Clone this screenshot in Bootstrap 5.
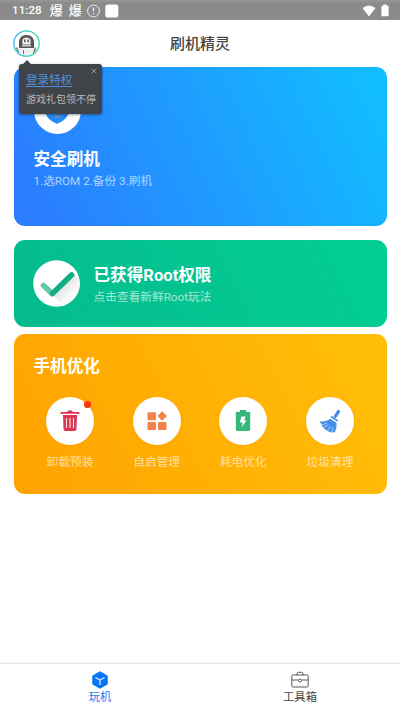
<!DOCTYPE html>
<html lang="zh-CN">
<head>
<meta charset="utf-8">
<meta name="viewport" content="width=device-width, initial-scale=1">
<title>刷机精灵</title>
<link href="https://cdn.jsdelivr.net/npm/bootstrap@5.3.0/dist/css/bootstrap.min.css" rel="stylesheet">
<style>
body{font-family:Roboto,"Noto Sans CJK SC",sans-serif;background:#fff;height:710px;overflow:hidden;line-height:1}
svg{display:block;flex:none}
.status{height:20px;background:linear-gradient(#999 0,#8b8b8b 3px);padding:1px 10px 0 12px;font-size:11.5px;font-weight:500;letter-spacing:.1px}
.status .note{font-size:13px;margin-left:6px}
.topbar{height:46.5px}
.topbar h1{font-size:15px;font-weight:500;color:#444;line-height:20px;padding-top:1px}
.avatar{margin-left:13px;margin-right:-40px}
.panel{margin:0 13.5px;border-radius:11px;color:#fff}
.flash{height:159.5px;background:linear-gradient(65deg,#2b7cff 5%,#12bdff 95%);padding:20.5px 20px}
.rooted{height:87.5px;margin-top:13.5px;background:linear-gradient(65deg,#06ba8e,#02cf93);padding:0 19.5px}
.rooted .words{margin-left:13.5px;padding-top:4px}
.boost{height:159.5px;margin-top:7px;background:linear-gradient(65deg,#ffa200,#ffc008);padding:22.5px 20px 0}
.panel h2{font-size:16.6px;font-weight:700;line-height:20px;margin:0}
.sub{font-size:11.7px;line-height:15px;opacity:.62}
.disc{width:47px;height:47px;border-radius:50%;background:#fff}
.tool{width:70px}
.tool .disc{width:48px;height:48px;box-shadow:0 0 3px #f58b0040}
.tool .sub{opacity:.6;margin-top:10px}
.tools{margin:20px 1.5px 0}
.dot{width:6.5px;height:6.5px;right:3.5px;top:4.5px;background:#f33c0c;border-radius:50%}
.tip{left:18.5px;top:64px;width:83px;height:50px;background:#404449;border-radius:3px;padding:8.5px 7.5px;color:#b8babd;font-size:10px;box-shadow:0 1px 3px #0006}
.tip::before{content:"";position:absolute;left:4px;top:-4px;border:4px solid transparent;border-top:0;border-bottom-color:#404449}
.tip a{font-size:11.6px;line-height:15px;color:#4e91df;text-underline-offset:2px}
.close-x{right:5px;top:4px}
.tabs{height:47px;border-top:1px solid #e5e5e5;box-shadow:0 -1px 1px #f3f3f3;font-size:11.3px}
.tabs a{color:#444;padding-top:7px}
.tabs a.active{color:#1677f2}
.tabs span{line-height:17px}
</style>
<script src="https://cdn.jsdelivr.net/npm/bootstrap@5.3.0/dist/js/bootstrap.bundle.min.js"></script>
</head>
<body class="d-flex flex-column position-relative">
<div class="status d-flex align-items-center justify-content-between text-white">
  <div class="d-flex align-items-center">
    <span>11:28</span><span class="note ms-2">爆</span><span class="note">爆</span>
    <svg class="ms-1" width="14" height="14" viewBox="0 0 14 14" fill="none" stroke="#eee"><circle cx="7.5" cy="7" r="5.9"/><path d="M7.5 3.6v4M7.5 9v1.2" stroke-width="1.3"/></svg>
    <svg class="ms-1" width="15" height="14" viewBox="0 0 15 14"><rect x="1.3" y=".5" width="13" height="13" rx="2.5" fill="#fff"/></svg>
  </div>
  <div class="d-flex align-items-center">
    <svg width="14" height="12" viewBox="0 0 14 12"><path d="M.5 3Q7-2 13.5 3L7 11.5z" fill="#fff"/></svg>
    <svg class="ms-1" width="10" height="13" viewBox="0 0 10 13"><path d="M3.3.5h3.400v1.300h1q.9 0 .9.9v8.500q0 1-.9 1H2.300q-.9 0-.9-1V2.700q0-.9.9-.9h1z" fill="#fff"/></svg>
  </div>
</div>
<header class="topbar d-flex align-items-center">
  <svg class="avatar" width="27" height="27" viewBox="0 0 27 27"><defs><linearGradient id="ring"><stop stop-color="#39b9ed"/><stop offset="1" stop-color="#39d7a7"/></linearGradient><clipPath id="face"><circle cx="13.5" cy="13.5" r="12"/></clipPath></defs><circle cx="13.5" cy="13.5" r="12.7" fill="#fff" stroke="url(#ring)" stroke-width="1.3"/><g clip-path="url(#face)"><path d="M6 18v-5q0-8 7.500-8T21 13v5z" fill="#555"/><path d="M9.500 14.500Q8 7.500 13.500 7.500T17.500 14.500z" fill="#f1f1f1"/><path d="M11.800 9.500v2.700M15.200 9.500v2.700" stroke="#444" stroke-width="1.400"/><path d="M9 15h9v1.500H9z" fill="#ccc"/><path d="M4 18.500h19v7H4z" fill="#eef0f1"/><path d="M3.500 17.500 6 24M22.500 17.500 20.500 24" stroke="#777" stroke-width="1.500"/><path d="M10.500 20v4" stroke="#777"/></g></svg>
  <h1 class="flex-fill text-center m-0">刷机精灵</h1>
</header>
<main class="flex-fill">
  <section class="panel flash">
    <div class="disc d-flex align-items-center justify-content-center"><svg width="28" height="30" viewBox="0 0 28 30"><path d="M14 1 26 5v9q0 9-12 14Q2 23 2 14V5z" fill="#258bfa"/><path d="M11 19.500h7L16 21.500h-3z" fill="#8b9299"/></svg></div>
    <h2 class="mt-3">安全刷机</h2>
    <div class="sub mt-1">1.选ROM 2.备份 3.刷机</div>
  </section>
  <section class="panel rooted d-flex align-items-center">
    <svg width="47" height="47" viewBox="0 0 47 47"><defs><clipPath id="rd"><circle cx="23.5" cy="23.5" r="23.3"/></clipPath><linearGradient id="shade" x2="1" y2="1"><stop stop-color="#c6cbc9"/><stop offset=".65" stop-color="#fff"/></linearGradient></defs><circle cx="23.5" cy="23.5" r="23.3" fill="#fff"/><path clip-path="url(#rd)" d="M21 36 41 14 52 25 31 47z" fill="url(#shade)"/><path d="m10.500 25.500 8.500 8" stroke="#63c8a7" stroke-width="5.500" stroke-linecap="round"/><path d="M19.500 33.500 38.500 15" stroke="#12ad82" stroke-width="5.500" stroke-linecap="round"/></svg>
    <div class="words"><h2>已获得Root权限</h2><div class="sub mt-1">点击查看新鲜Root玩法</div></div>
  </section>
  <section class="panel boost">
    <h2>手机优化</h2>
    <div class="tools d-flex justify-content-between">
      <div class="tool d-flex flex-column align-items-center"><div class="disc position-relative d-flex align-items-center justify-content-center"><svg width="20" height="22" viewBox="0 0 20 22"><path d="M7.500 1.500q0-1 1-1h3q1 0 1 1V2h7v1.700H.5V2h7zM3 5h14l-.5 14q-.1 2-2 2h-9q-1.900 0-2-2z" fill="#dc3553"/><path d="M6.500 8v10M10 8v10M13.500 8v10" stroke="#ffd9de" stroke-width="1.200"/></svg><i class="dot position-absolute"></i></div><div class="sub text-nowrap">卸载预装</div></div>
      <div class="tool d-flex flex-column align-items-center"><div class="disc d-flex align-items-center justify-content-center"><svg width="20" height="20" viewBox="0 0 20 20" fill="#f4814a"><rect x=".5" y="1.300" width="8.500" height="8" rx="1"/><rect x=".5" y="11" width="8.500" height="8" rx="1"/><rect x="11" y="11" width="8.500" height="8" rx="1"/><path d="m15.200.2 4.700 4.800-4.700 4.700L10.500 5z"/></svg></div><div class="sub text-nowrap">自启管理</div></div>
      <div class="tool d-flex flex-column align-items-center"><div class="disc d-flex align-items-center justify-content-center"><svg width="16" height="23" viewBox="0 0 16 23"><path d="M5 1h6v1.700h2.800q1.400 0 1.400 1.400v16.500q0 1.400-1.400 1.400H2.200Q.8 22 .8 20.600V4.100q0-1.400 1.400-1.400H5z" fill="#35b87a"/><path d="M6.500 7.500h4l-1.300 4h2.300L6.800 18l.8-4.500H4.800z" fill="#fff"/></svg></div><div class="sub text-nowrap">耗电优化</div></div>
      <div class="tool d-flex flex-column align-items-center"><div class="disc d-flex align-items-center justify-content-center"><svg width="22" height="24" viewBox="0 0 22 24"><path d="M19.500 2.500 16.300 7.300" stroke="#438ee9" stroke-width="3.200" stroke-linecap="round"/><path d="m12.800 8 5.500 3.600" stroke="#438ee9" stroke-width="1.700" stroke-linecap="round"/><path d="m11.200 9.800 6.500 4.200q0 5.500-1.800 9.300l-3.500.2-4.200-1.400-4-3.300L.8 12.500Q7.500 12.800 11.200 9.800z" fill="#438ee9"/><path d="m9.500 15.500-5 3.500M11.500 17l-3.200 5M14 18l-1.300 5.500M8 14l-5.500 2" stroke="#d9e8ff" stroke-width=".7"/></svg></div><div class="sub text-nowrap">垃圾清理</div></div>
    </div>
  </section>
</main>
<aside class="tip position-absolute">
  <a href="#" class="d-block">登录特权</a><div class="mt-1 lh-base text-nowrap">游戏礼包领不停</div>
  <svg class="close-x position-absolute" width="6" height="6" viewBox="0 0 6 6"><path d="m.5.5 5 5m0-5-5 5" stroke="#aaa" stroke-width=".8"/></svg>
</aside>
<nav class="tabs d-flex text-center">
  <a href="#" class="active w-50 d-flex flex-column align-items-center text-decoration-none"><svg width="18" height="18" viewBox="0 0 18 18"><path d="M9 .8 16.200 4.800v8.400L9 17.200 1.800 13.200V4.800z" fill="#0875f5" stroke="#0875f5" stroke-linejoin="round"/><path d="M4.500 6.500 9 9l4.500-2.500M9 9v5" fill="none" stroke="#d8e9ff" stroke-width="1.300"/></svg><span>玩机</span></a>
  <a href="#" class="w-50 d-flex flex-column align-items-center text-decoration-none"><svg width="18" height="18" viewBox="0 0 18 18" fill="none" stroke="#555"><rect x=".8" y="4" width="16.400" height="12" rx="1.300"/><path d="M6 4V2.800q0-1.500 1.500-1.500h3Q12 1.300 12 2.800V4M1 9h6m4 0h6"/><circle cx="9" cy="9.500" r="1.500"/></svg><span>工具箱</span></a>
</nav>
</body>
</html>
